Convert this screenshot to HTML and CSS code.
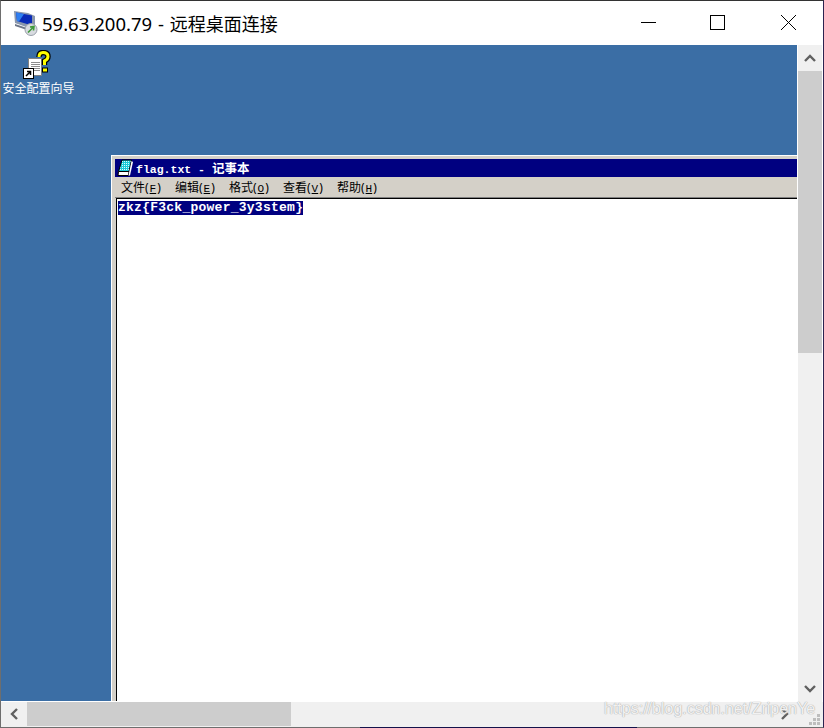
FILE: index.html
```html
<!DOCTYPE html>
<html lang="zh-CN">
<head>
    <meta charset="UTF-8">
    <title>59.63.200.79 - 远程桌面连接</title>
    <link rel="stylesheet" href="styles.css">
</head>
<body>
    <div class="rdp-window">
        <div class="titlebar">
            <svg class="rdp-icon" width="26" height="26" viewBox="0 0 26 26">
                <path d="M1 1 L15 3 L22 6 L22 18 L16 18 L2 13 Z" fill="#8a97ad"/>
                <path d="M3 2.5 L19 5.5 L19 15.5 L4 11 Z" fill="#0a2bb8"/>
                <path d="M3 2.5 L11 4 L6 11.6 L4 11 Z" fill="#2f7ff0"/>
                <path d="M2 14 L14 18 L14 20 L2 16 Z" fill="#6d7688"/>
                <circle cx="18" cy="19.5" r="6" fill="#d8dbe0" stroke="#9aa0aa"/>
                <path d="M15 22.5 L21 16.5 M17 17 L21 16.5 L20.5 20.5" stroke="#3f9a3a" stroke-width="1.6" fill="none"/>
            </svg>
            <div class="title-text">59.63.200.79 - <span class="title-cjk">远程桌面连接</span></div>
            <div class="caption-btns">
                <div class="caption-btn">
                    <svg width="16" height="16" viewBox="0 0 16 16"><path d="M1 7.5 H16" stroke="#000"/></svg>
                </div>
                <div class="caption-btn">
                    <svg width="16" height="16" viewBox="0 0 16 16"><rect x="0.5" y="0.5" width="14" height="14" fill="none" stroke="#000"/></svg>
                </div>
                <div class="caption-btn">
                    <svg width="16" height="16" viewBox="0 0 16 16"><path d="M1 0 L16 15 M16 0 L1 15" stroke="#000"/></svg>
                </div>
            </div>
        </div>

        <div class="viewport">
            <div class="desktop">
                <div class="desktop-icon">
                    <svg width="28" height="30" viewBox="0 0 28 30">
                        <path d="M5.5 8.5 H18.5 V25.5 H5.5 Z" fill="#fff" stroke="#808080"/>
                        <path d="M8 12.5 H17 M8 14.5 H17 M8 16.5 H17 M8 18.5 H17 M8 20.5 H17" stroke="#8c8c8c"/>
                        <path d="M16 7 Q16 2.5 20 2.5 Q25 2.5 25 6.5 Q25 9.5 21.5 11 V15" stroke="#000" stroke-width="5.4" fill="none"/>
                        <path d="M16 7 Q16 2.5 20 2.5 Q25 2.5 25 6.5 Q25 9.5 21.5 11 V15" stroke="#ff0" stroke-width="3" fill="none"/>
                        <rect x="19.5" y="18" width="5" height="4" fill="#ff0" stroke="#000"/>
                        <rect x="0.5" y="18.5" width="10" height="10" fill="#fff" stroke="#000"/>
                        <rect x="1.5" y="19.5" width="8" height="8" fill="#fff"/>
                        <path d="M3 26 L7 22 M4 21.5 H7.5 V25" stroke="#000" stroke-width="1.5" fill="none"/>
                    </svg>
                    <div class="desktop-icon-label">安全配置向导</div>
                </div>

                <div class="notepad">
                    <div class="np-title">
                        <svg class="np-icon" width="18" height="18" viewBox="0 0 18 18">
                            <defs>
                                <pattern id="dither" width="2" height="2" patternUnits="userSpaceOnUse">
                                    <rect width="2" height="2" fill="#19c8d8"/>
                                    <rect width="1" height="1" fill="#d8ffff"/>
                                </pattern>
                            </defs>
                            <path d="M6 1 H15.5 L13 12.5 H2.5 Z" fill="url(#dither)" stroke="#000"/>
                            <path d="M2.5 12.5 L2 16.5 H12.5 L13 12.5 Z" fill="#fff" stroke="#000"/>
                            <path d="M15.5 2 L17 3 L14 16.5 H12.5 Z" fill="#fff"/>
                        </svg>
                        <span class="np-title-text">flag.txt - <span class="np-title-cjk">记事本</span></span>
                    </div>
                    <div class="np-menu">
                        <span class="np-menu-item">文件(<u>F</u>)</span>
                        <span class="np-menu-item">编辑(<u>E</u>)</span>
                        <span class="np-menu-item">格式(<u>O</u>)</span>
                        <span class="np-menu-item">查看(<u>V</u>)</span>
                        <span class="np-menu-item">帮助(<u>H</u>)</span>
                    </div>
                    <div class="np-edit">
                        <span class="np-selected">zkz{F3ck_power_3y3stem}</span>
                    </div>
                </div>
            </div>

            <div class="vscroll">
                <div class="scroll-btn-v">
                    <svg width="12" height="8" viewBox="0 0 12 8"><path d="M1 7 L6 2 L11 7" stroke="#606060" stroke-width="2.4" fill="none"/></svg>
                </div>
                <div class="vthumb"></div>
                <div class="scroll-fill"></div>
                <div class="scroll-btn-v">
                    <svg width="12" height="8" viewBox="0 0 12 8"><path d="M1 1 L6 6 L11 1" stroke="#606060" stroke-width="2.4" fill="none"/></svg>
                </div>
            </div>
        </div>

        <div class="hscroll">
            <div class="scroll-btn-h">
                <svg width="8" height="12" viewBox="0 0 8 12"><path d="M7 1 L2 6 L7 11" stroke="#606060" stroke-width="2.4" fill="none"/></svg>
            </div>
            <div class="hthumb"></div>
            <div class="scroll-fill"></div>
            <div class="scroll-btn-h">
                <svg width="8" height="12" viewBox="0 0 8 12"><path d="M1 1 L6 6 L1 11" stroke="#606060" stroke-width="2.4" fill="none"/></svg>
            </div>
            <svg class="grip" width="24" height="24" viewBox="0 0 24 24" fill="#bdbdbd">
                <rect x="19" y="12" width="3" height="3"/>
                <rect x="15" y="16" width="3" height="3"/>
                <rect x="19" y="16" width="3" height="3"/>
                <rect x="11" y="20" width="3" height="3"/>
                <rect x="15" y="20" width="3" height="3"/>
                <rect x="19" y="20" width="3" height="3"/>
            </svg>
        </div>

        <div class="bottom-edge"></div>
        <div class="watermark">https://blog.csdn.net/ZripenYe</div>
    </div>
</body>
</html>
```

FILE: styles.css
```css
* {
    margin: 0;
    padding: 0;
    box-sizing: border-box;
}

body {
    width: 824px;
    height: 728px;
    overflow: hidden;
    background: white;
    font-family: "Noto Sans", "Noto Sans CJK SC", sans-serif;
}

.rdp-window {
    position: relative;
    width: 824px;
    height: 728px;
    display: flex;
    flex-direction: column;
    border: 1px solid #6e6e6e;
    border-top-color: #333;
    border-right-color: #2b2350;
}

.titlebar {
    height: 44px;
    flex: none;
    display: flex;
    align-items: center;
    background: white;
    padding-left: 12px;
}

.rdp-icon {
    flex: none;
}

.title-text {
    margin-left: 3px;
    font-size: 18.5px;
    word-spacing: 1px;
    color: #000;
    white-space: nowrap;
}

.title-cjk {
    font-size: 18px;
}

.caption-btns {
    display: flex;
    margin-left: auto;
}

.caption-btn {
    width: 70px;
    height: 44px;
    display: flex;
    align-items: center;
    justify-content: center;
}

.viewport {
    flex: 1;
    min-height: 0;
    display: flex;
}

.desktop {
    position: relative;
    flex: 1;
    min-width: 0;
    overflow: hidden;
    background: #3b6ea5;
    margin-right: 1px;
    margin-bottom: 1px;
}

.desktop-icon {
    position: absolute;
    left: 0;
    top: 5px;
    width: 75px;
    display: flex;
    flex-direction: column;
    align-items: center;
}

.desktop-icon svg {
    margin-left: -4px;
}

.desktop-icon-label {
    font-size: 12px;
    line-height: 14px;
    margin-top: 2px;
    color: white;
    white-space: nowrap;
}

.notepad {
    position: absolute;
    left: 110px;
    top: 110px;
    width: 800px;
    height: 700px;
    background: #d4d0c8;
    border-top: 1px solid white;
    border-left: 1px solid white;
    padding: 3px;
    display: flex;
    flex-direction: column;
}

.np-title {
    height: 18px;
    flex: none;
    display: flex;
    align-items: center;
    background: #000080;
    color: white;
    padding-left: 1px;
}

.np-icon {
    flex: none;
}

.np-title-text {
    margin-left: 2px;
    margin-bottom: 2px;
    font-family: "Liberation Mono", "Noto Sans CJK SC", monospace;
    font-size: 11.5px;
    font-weight: bold;
    white-space: pre;
}

.np-title-cjk {
    font-size: 12.5px;
}

.np-menu {
    height: 21px;
    flex: none;
    display: flex;
    align-items: center;
    padding-left: 6px;
    font-size: 12px;
    color: #000;
    border-bottom: 1px solid #808080;
}

.np-menu-item {
    width: 54px;
    white-space: nowrap;
}

.np-menu-item u {
    padding: 0 1px;
    font-family: "Liberation Mono", monospace;
    font-size: 11px;
}

.np-edit {
    flex: 1;
    display: flex;
    align-items: flex-start;
    margin-left: 1px;
    background: white;
    border-top: 1px solid #000;
    border-left: 1px solid #000;
    padding: 2px 0 0 1px;
}

.np-selected {
    height: 14px;
    line-height: 14px;
    background: #000080;
    color: white;
    font-family: "Liberation Mono", monospace;
    font-size: 13px;
    font-weight: bold;
    letter-spacing: 0.25px;
    white-space: pre;
}

.vscroll {
    width: 24px;
    flex: none;
    margin-right: 1px;
    display: flex;
    flex-direction: column;
    background: #f0f0f0;
}

.scroll-btn-v {
    height: 26px;
    flex: none;
    display: flex;
    align-items: center;
    justify-content: center;
}

.vthumb {
    height: 282px;
    flex: none;
    background: #cdcdcd;
}

.scroll-fill {
    flex: 1;
}

.hscroll {
    height: 25px;
    flex: none;
    display: flex;
    align-items: flex-start;
    background: #f0f0f0;
}

.scroll-btn-h {
    width: 26px;
    height: 24px;
    flex: none;
    display: flex;
    align-items: center;
    justify-content: center;
}

.hthumb {
    width: 264px;
    height: 24px;
    flex: none;
    background: #cdcdcd;
}

.grip {
    flex: none;
    margin-right: 1px;
}

.bottom-edge {
    position: absolute;
    left: 359px;
    bottom: -1px;
    width: 277px;
    height: 1px;
    background: #14124a;
}

.watermark {
    position: absolute;
    left: 603px;
    top: 699px;
    font-family: "Liberation Sans", sans-serif;
    font-size: 16px;
    color: rgba(255, 255, 255, 0.85);
    text-shadow: 0 0 1px #aaa, 0 0 1px #aaa;
    white-space: nowrap;
}
```
